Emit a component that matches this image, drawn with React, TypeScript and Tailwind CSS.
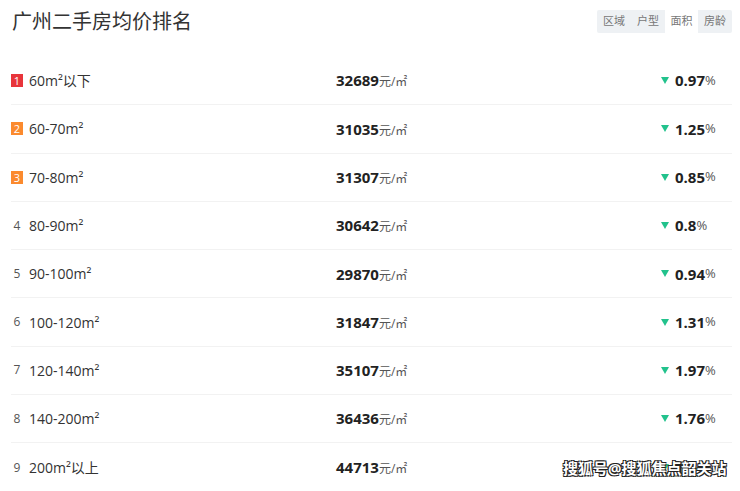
const rows = [
  { rank: 1, label: "60m²以下", price: "32689", change: "0.97" },
  { rank: 2, label: "60-70m²", price: "31035", change: "1.25" },
  { rank: 3, label: "70-80m²", price: "31307", change: "0.85" },
  { rank: 4, label: "80-90m²", price: "30642", change: "0.8" },
  { rank: 5, label: "90-100m²", price: "29870", change: "0.94" },
  { rank: 6, label: "100-120m²", price: "31847", change: "1.31" },
  { rank: 7, label: "120-140m²", price: "35107", change: "1.97" },
  { rank: 8, label: "140-200m²", price: "36436", change: "1.76" },
  { rank: 9, label: "200m²以上", price: "44713", change: "1.4" },
]

const tabs = ["区域", "户型", "面积", "房龄"]

function Rank({ n }: { n: number }) {
  if (n === 1) {
    return <span className="w-[12px] h-[13px] bg-[#e8353b] text-white text-[11px] leading-[13px] text-center">1</span>
  }
  if (n <= 3) {
    return <span className="w-[12px] h-[13px] bg-[#fb8a2e] text-white text-[11px] leading-[13px] text-center">{n}</span>
  }
  return <span className="w-[12px] text-[#555] text-[12px] text-center">{n}</span>
}

export default function App() {
  return (
    <div
      className="relative w-[740px] h-[491px] bg-white overflow-hidden text-[#333]"
      style={{ fontFamily: '"Open Sans", "Noto Sans CJK SC", sans-serif' }}
    >
      <div className="flex items-start justify-between pl-[12px] pr-[8px] h-[57px]">
        <h1 className="text-[20px] leading-[24px] mt-[10px] text-[#333]">广州二手房均价排名</h1>
        <div className="flex mt-[10px] bg-[#eef1f4] rounded-[2px]">
          {tabs.map((t) => (
            <span
              key={t}
              className={
                t === "面积"
                  ? "w-[33px] h-[23px] flex items-center justify-center text-[11px] text-[#777] bg-white"
                  : "w-[34px] h-[23px] flex items-center justify-center text-[11px] text-[#777]"
              }
            >
              {t}
            </span>
          ))}
        </div>
      </div>

      <div className="pl-[11px] pr-[8px]">
        {rows.map((r, i) => (
          <div
            key={r.rank}
            className={
              i < rows.length - 1
                ? "grid grid-cols-[325px_324px_1fr] items-center h-[48.3px] border-b border-[#f2f2f2]"
                : "grid grid-cols-[325px_324px_1fr] items-center h-[48.3px]"
            }
          >
            <div className="flex items-center gap-[6px]">
              <Rank n={r.rank} />
              <span className="text-[14px] text-[#333]">{r.label}</span>
            </div>
            <div className="flex items-baseline">
              <span className="text-[15px] font-bold text-[#222]">{r.price}</span>
              <span className="text-[12px] text-[#555]">元/㎡</span>
            </div>
            <div className="flex items-center">
              <svg width="8" height="7" viewBox="0 0 8 7" className="ml-[1px]">
                <polygon points="0,0 8,0 4,7" fill="#22c28c" />
              </svg>
              <span className="ml-[6px] text-[15px] font-bold text-[#222]">{r.change}</span>
              <span className="text-[13px] text-[#555]">%</span>
            </div>
          </div>
        ))}
      </div>

      <div
        className="absolute left-[563px] top-[458px] text-[15px] leading-[20px] font-bold text-white whitespace-nowrap"
        style={{ textShadow: "1px 1px 0 #222, -1px -1px 0 #222, 1px -1px 0 #222, -1px 1px 0 #222" }}
      >
        搜狐号@搜狐焦点韶关站
      </div>
    </div>
  )
}
